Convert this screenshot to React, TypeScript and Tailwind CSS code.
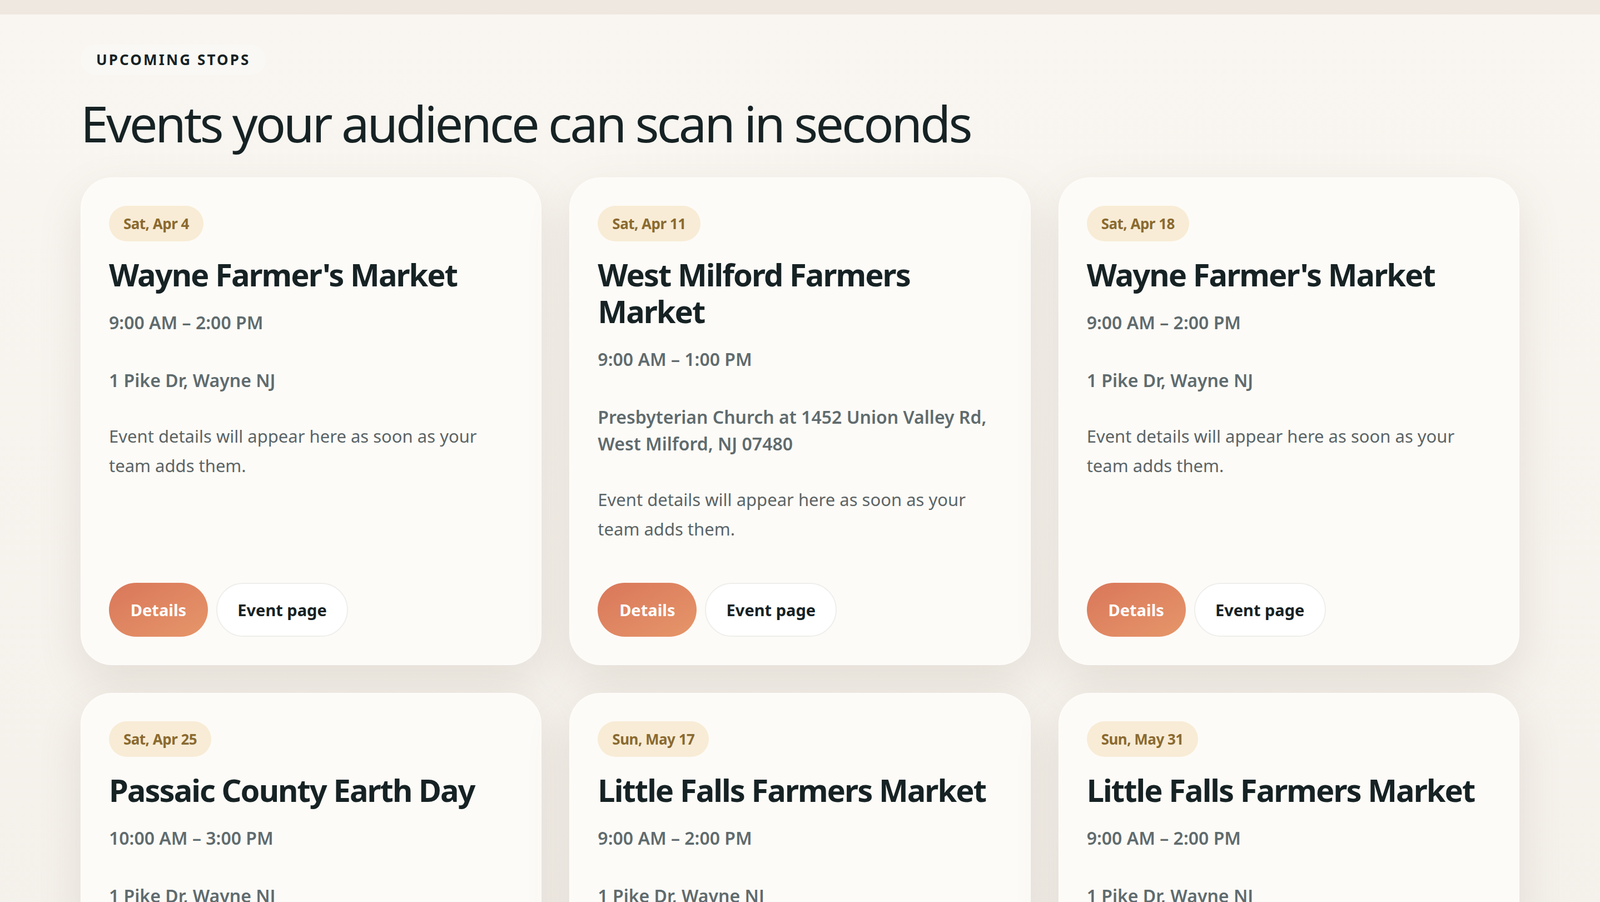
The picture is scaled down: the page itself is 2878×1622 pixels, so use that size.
const events = [
  { date: "Sat, Apr 4", title: "Wayne Farmer's Market", time: "9:00 AM – 2:00 PM", address: ["1 Pike Dr, Wayne NJ"] },
  { date: "Sat, Apr 11", title: "West Milford Farmers Market", time: "9:00 AM – 1:00 PM", address: ["Presbyterian Church at 1452 Union Valley Rd,", "West Milford, NJ 07480"] },
  { date: "Sat, Apr 18", title: "Wayne Farmer's Market", time: "9:00 AM – 2:00 PM", address: ["1 Pike Dr, Wayne NJ"] },
  { date: "Sat, Apr 25", title: "Passaic County Earth Day", time: "10:00 AM – 3:00 PM", address: ["1 Pike Dr, Wayne NJ"] },
  { date: "Sun, May 17", title: "Little Falls Farmers Market", time: "9:00 AM – 2:00 PM", address: ["1 Pike Dr, Wayne NJ"] },
  { date: "Sun, May 31", title: "Little Falls Farmers Market", time: "9:00 AM – 2:00 PM", address: ["1 Pike Dr, Wayne NJ"] },
];

const EventCard = ({ date, title, time, address }: { date: string; title: string; time: string; address: string[] }) => {
  return (
    <div className="flex flex-col bg-[#fdfbf7] rounded-[56px] p-[50px] shadow-[0_30px_80px_rgba(120,100,80,0.14)] border border-white/70">
      <div className="self-start bg-[#f8ecd6] text-[#8a6a30] rounded-full px-[26px] h-[64px] flex items-center text-[26px] font-bold tracking-[-0.02em]">
        {date}
      </div>
      <h3 className="mt-[26px] text-[56px] leading-[66px] font-bold tracking-[-0.035em] text-[#162224]">{title}</h3>
      <p className="mt-[30px] text-[32px] font-semibold text-[#5f6b6e]">{time}</p>
      <p className="mt-[56px] text-[32px] leading-[48px] font-semibold text-[#5f6b6e]">
        {address.map((a) => (
          <span key={a} className="block">{a}</span>
        ))}
      </p>
      <p className="mt-[50px] text-[31px] leading-[53px] text-[#5b6466] max-w-[720px]">
        Event details will appear here as soon as your team adds them.
      </p>
      <div className="mt-auto pt-[70px] flex gap-[15px]">
        <button className="h-[97px] w-[178px] rounded-full bg-gradient-to-br from-[#d9775a] to-[#e6966a] text-white text-[29px] font-bold">
          Details
        </button>
        <button className="h-[97px] w-[237px] rounded-full bg-white border-2 border-[#eeeeec] text-[#162224] text-[29px] font-bold">
          Event page
        </button>
      </div>
    </div>
  );
};

export default function App() {
  return (
    <div className="min-h-screen bg-[#f7f3ee] font-['Inter_Variable','Inter','Liberation_Sans',sans-serif]">
      <div className="h-[26px] bg-[#efe8e0]" />
      <div className="px-[145px] bg-gradient-to-b from-[#f9f6f1] to-[#f3efe9]">
        <div className="pt-[54px]">
          <span className="inline-block rounded-full px-[28px] py-[8px] bg-[#faf8f4] text-[26px] font-bold tracking-[0.12em] text-[#162224]">
            UPCOMING STOPS
          </span>
        </div>
        <h1 className="mt-[34px] text-[90px] leading-[104px] tracking-[-0.045em] text-[#162224] font-normal">
          Events your audience can scan in seconds
        </h1>
        <div className="mt-[46px] grid grid-cols-3 gap-[50px] pb-[100px]">
          {events.map((e, i) => (
            <EventCard key={i} {...e} />
          ))}
        </div>
      </div>
    </div>
  );
}
